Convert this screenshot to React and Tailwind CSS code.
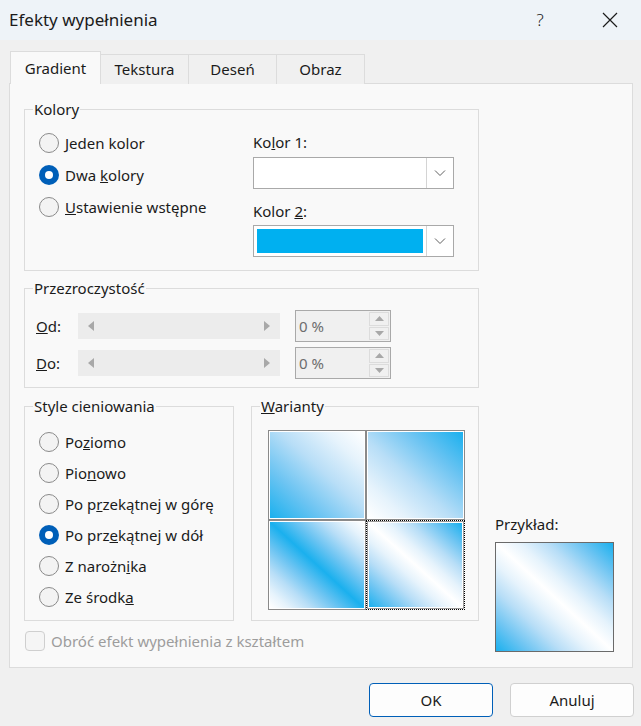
import React from "react";

const BLUE = "#1ab0ee";

const Radio = ({ checked }) =>
  checked ? (
    <span className="w-[20px] h-[20px] rounded-full bg-[#005fb8] flex items-center justify-center shrink-0">
      <span className="w-[8px] h-[8px] rounded-full bg-white" />
    </span>
  ) : (
    <span className="w-[20px] h-[20px] rounded-full border border-[#8a8a8a] bg-[#f3f3f3] shrink-0" />
  );

const RadioRow = ({ checked, h, children }) => (
  <div className={`flex items-center gap-[6px] ${h}`}>
    <Radio checked={checked} />
    <span className="leading-[20px]">{children}</span>
  </div>
);

const Chevron = () => (
  <svg width="12" height="8" viewBox="0 0 12 8" fill="none">
    <path d="M1 1.5 L6 6.5 L11 1.5" stroke="#606060" strokeWidth="1" />
  </svg>
);

const Combo = ({ fill }) => (
  <div className="w-[201px] h-[32px] border border-[#a9a9a9] bg-white flex">
    <div className="flex-1 p-[3px]">
      {fill && <div className="w-full h-full bg-[#00b0f0]" />}
    </div>
    <div className="w-[27px] border-l border-[#d4d4d4] flex items-center justify-center">
      <Chevron />
    </div>
  </div>
);

const Slider = () => (
  <div className="w-[202px] h-[26px] bg-[#ececec] flex items-center justify-between px-[10px]">
    <svg width="6" height="10" viewBox="0 0 6 10">
      <path d="M6 0 L0 5 L6 10 Z" fill="#a8a8a8" />
    </svg>
    <svg width="6" height="10" viewBox="0 0 6 10">
      <path d="M0 0 L6 5 L0 10 Z" fill="#a8a8a8" />
    </svg>
  </div>
);

const Spin = () => (
  <div className="w-[96px] h-[32px] border border-[#a9a9a9] bg-[#f0f0f0] flex">
    <div className="flex-1 flex items-center pl-[3px] text-[#6d6d6d]">0 %</div>
    <div className="w-[22px] flex flex-col p-[1px] gap-[1px]">
      <div className="flex-1 border border-[#dcdcdc] flex items-center justify-center">
        <svg width="9" height="5" viewBox="0 0 9 5">
          <path d="M0 5 L4.5 0 L9 5 Z" fill="#a8a8a8" />
        </svg>
      </div>
      <div className="flex-1 border border-[#dcdcdc] flex items-center justify-center">
        <svg width="9" height="5" viewBox="0 0 9 5">
          <path d="M0 0 L4.5 5 L9 0 Z" fill="#a8a8a8" />
        </svg>
      </div>
    </div>
  </div>
);

const Legend = ({ children }) => (
  <legend className="ml-[8px] px-px leading-[20px]">{children}</legend>
);

const Variant = ({ bg, selected }) =>
  selected ? (
    <div className="border border-dotted border-black">
      <div className="w-full h-full border border-[#9a9a9a] p-px bg-white">
        <div className="w-full h-full" style={{ background: bg }} />
      </div>
    </div>
  ) : (
    <div className="border border-[#8a8a8a] p-px bg-white">
      <div className="w-full h-full" style={{ background: bg }} />
    </div>
  );

export default function App() {
  // blue -> white with a soft falloff, like the Office preview
  const g1 = `linear-gradient(to top right, ${BLUE} 0%, #6cc4f2 28%, #b8def7 55%, #e6f3fc 80%, #ffffff 100%)`;
  const g2 = `linear-gradient(to top right, #ffffff 0%, #e6f3fc 20%, #b8def7 45%, #6cc4f2 72%, ${BLUE} 100%)`;
  const g3 = `linear-gradient(to top right, #ffffff 0%, #e6f3fc 10%, #b8def7 22%, #6cc4f2 36%, ${BLUE} 50%, #6cc4f2 64%, #b8def7 78%, #e6f3fc 90%, #ffffff 100%)`;
  const g4 = `linear-gradient(to top right, ${BLUE} 0%, #6cc4f2 14%, #b8def7 28%, #e6f3fc 40%, #ffffff 50%, #e6f3fc 60%, #b8def7 72%, #6cc4f2 86%, ${BLUE} 100%)`;

  return (
    <div className="w-[641px] h-[726px] bg-[#f0f0f0] text-[15px] text-[#1b1b1b] overflow-hidden font-['Noto_Sans',sans-serif]">
      {/* Title bar */}
      <div className="h-[40px] bg-[#eef3f8] flex items-center pl-[9px]">
        <span className="text-[17px] flex-1">Efekty wypełnienia</span>
        <span className="text-[17px] w-[20px] text-center mr-[52px] font-light">?</span>
        <svg width="16" height="16" viewBox="0 0 16 16" className="mr-[23px]">
          <path d="M1 1 L15 15 M15 1 L1 15" stroke="#1b1b1b" strokeWidth="1.2" />
        </svg>
      </div>

      <div className="pl-[9px] pt-[12px]">
        {/* Tabs */}
        <div className="flex items-end h-[32px] pl-[1px]">
          <div className="w-[91px] h-[33px] bg-[#f9f9f9] border border-b-0 border-[#dcdcdc] flex items-center justify-center relative z-10">
            Gradient
          </div>
          {["Tekstura", "Deseń", "Obraz"].map((t) => (
            <div
              key={t}
              className="w-[88px] h-[30px] bg-[#f0f0f0] border border-l-0 border-b-0 border-[#dcdcdc] flex items-center justify-center"
            >
              {t}
            </div>
          ))}
        </div>

        {/* Panel */}
        <div className="w-[624px] h-[585px] -mt-px border border-[#dcdcdc] bg-[#f9f9f9] flex pl-[14px]">
          <div className="w-[455px] flex flex-col">
            {/* Kolory */}
            <fieldset className="mt-[15px] h-[172px] border border-[#dcdcdc]">
              <Legend>Kolory</Legend>
              <div className="flex">
                <div className="w-[228px] pl-[14px] pt-[8px] flex flex-col">
                  <RadioRow h="h-[32px]"><u>J</u>eden kolor</RadioRow>
                  <RadioRow h="h-[32px]" checked>Dwa <u>k</u>olory</RadioRow>
                  <RadioRow h="h-[32px]"><u>U</u>stawienie wstępne</RadioRow>
                </div>
                <div className="flex flex-col pt-[13px]">
                  <div className="leading-[20px]">Ko<u>l</u>or 1:</div>
                  <div className="mt-[5px]">
                    <Combo />
                  </div>
                  <div className="leading-[20px] mt-[12px]">Kolor <u>2</u>:</div>
                  <div className="mt-[4px]">
                    <Combo fill />
                  </div>
                </div>
              </div>
            </fieldset>

            {/* Przezroczystość */}
            <fieldset className="mt-[7px] h-[110px] border border-[#dcdcdc]">
              <Legend>Przezroczystość</Legend>
              <div className="flex flex-col pt-[12px] pl-[11px]">
                <div className="flex items-center h-[32px]">
                  <span className="w-[42px]"><u>O</u>d:</span>
                  <Slider />
                  <div className="ml-[15px]">
                    <Spin />
                  </div>
                </div>
                <div className="flex items-center h-[32px] mt-[5px]">
                  <span className="w-[42px]"><u>D</u>o:</span>
                  <Slider />
                  <div className="ml-[15px]">
                    <Spin />
                  </div>
                </div>
              </div>
            </fieldset>

            {/* Bottom groups */}
            <div className="flex mt-[8px] gap-[17px]">
              <fieldset className="w-[210px] h-[225px] border border-[#dcdcdc]">
                <Legend>Style cieniowania</Legend>
                <div className="flex flex-col pl-[14px] pt-[10px]">
                  <RadioRow h="h-[31px]">Po<u>z</u>iomo</RadioRow>
                  <RadioRow h="h-[31px]">Pio<u>n</u>owo</RadioRow>
                  <RadioRow h="h-[31px]">Po p<u>r</u>zekątnej w górę</RadioRow>
                  <RadioRow h="h-[31px]" checked>Po prz<u>e</u>kątnej w dół</RadioRow>
                  <RadioRow h="h-[31px]">Z narożn<u>i</u>ka</RadioRow>
                  <RadioRow h="h-[31px]">Ze środk<u>a</u></RadioRow>
                </div>
              </fieldset>
              <fieldset className="w-[228px] h-[225px] border border-[#dcdcdc]">
                <Legend><u>W</u>arianty</Legend>
                <div className="pl-[16px] pt-[14px]">
                  <div className="grid grid-cols-[98px_99px] grid-rows-[90px_90px] w-[197px]">
                    <Variant bg={g1} />
                    <Variant bg={g2} />
                    <Variant bg={g3} />
                    <Variant bg={g4} selected />
                  </div>
                </div>
              </fieldset>
            </div>

            {/* Checkbox */}
            <div className="flex items-center gap-[6px] mt-[9px] ml-px">
              <span className="w-[20px] h-[20px] rounded-[4px] border border-[#cfcfcf] bg-[#f5f5f5]" />
              <span className="text-[#9d9d9d]">Obróć efekt wypełnienia z kształtem</span>
            </div>
          </div>

          {/* Przykład */}
          <div className="flex flex-col justify-end pb-[15px] ml-[16px]">
            <div className="leading-[20px]">Przykład:</div>
            <div className="mt-[8px] w-[119px] h-[110px] border border-[#6a6a6a]" style={{ background: g4 }} />
          </div>
        </div>
      </div>

      {/* Buttons */}
      <div className="flex justify-end gap-[17px] pr-[7px] mt-[15px]">
        <button className="w-[124px] h-[34px] rounded-[4px] border border-[#005fb8] bg-[#fdfdfd]">OK</button>
        <button className="w-[124px] h-[34px] rounded-[4px] border border-[#d0d0d0] bg-[#fdfdfd]">Anuluj</button>
      </div>
    </div>
  );
}
